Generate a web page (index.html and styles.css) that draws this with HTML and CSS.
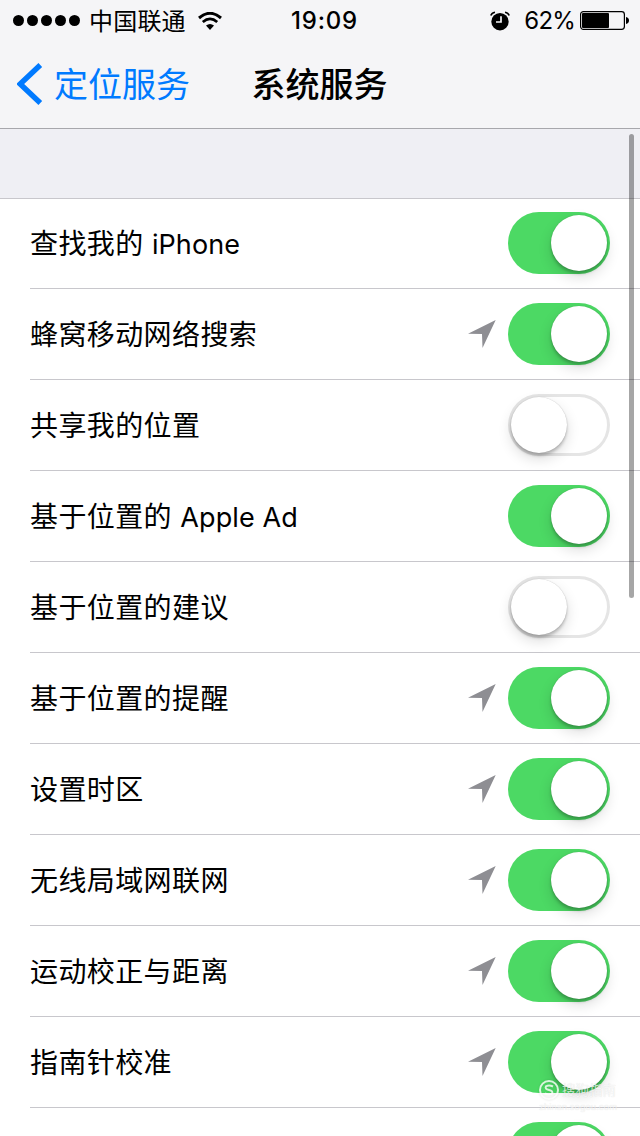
FILE: index.html
```html
<!DOCTYPE HTML>
<html lang="zh-CN">
<head>
<meta charset="utf-8">
<title>系统服务</title>
<link rel="stylesheet" href="styles.css">
</head>

<body>
<!-- 箭头图标，后面各行重复使用 -->
<svg class="defs" width="0" height="0">
	<symbol id="arrow" viewBox="0 0 28 28"><path d="M27.7 0 L14.5 28 L14 14 L0 13.8 Z"/></symbol>
</svg>

<div class="header">
	<div class="status">
		<div class="status-left">
			<span class="signal"><i></i><i></i><i></i><i></i><i></i></span>
			<span class="carrier">中国联通</span>
			<svg class="wifi" width="24" height="18" viewBox="0 0 24 18">
				<path d="M1 6 Q12 -3.4 23 6" fill="none" stroke="#000" stroke-width="3"/>
				<path d="M4.8 10 Q12 3.8 19.2 10" fill="none" stroke="#000" stroke-width="2.7"/>
				<path d="M8 13.6 Q12 10.2 16 13.6 L12 18 Z"/>
			</svg>
		</div>
		<div class="time">19:09</div>
		<div class="status-right">
			<svg class="alarm" width="20" height="20" viewBox="0 0 20 20">
				<circle cx="10" cy="10.7" r="8.7"/>
				<path d="M.8 4.6 Q1.7 1.7 5 1.2 M19.2 4.6 Q18.3 1.7 15 1.2" fill="none" stroke="#000" stroke-width="1.6"/>
				<path d="M11 5.2 V11 H6" fill="none" stroke="#f5f5f7" stroke-width="1.7"/>
			</svg>
			<span class="percent">62%</span>
			<svg class="battery" width="49" height="19" viewBox="0 0 49 19">
				<rect x=".6" y=".6" width="43.8" height="17.8" rx="2.8" fill="none" stroke="#000" stroke-width="1.2"/>
				<rect x="2" y="2" width="27" height="15" rx="1"/>
				<path d="M46 6 Q49 6.8 49 9.5 Q49 12.2 46 13 Z"/>
			</svg>
		</div>
	</div>
	<div class="nav">
		<a class="back" href="javascript:;">
			<svg width="26" height="42" viewBox="0 0 26 42"><path d="M23.3 2 L3.2 21 L23.3 40" fill="none" stroke="#007aff" stroke-width="5.4"/></svg>
			<span>定位服务</span>
		</a>
		<h1>系统服务</h1>
	</div>
</div>

<div class="gap"></div>

<ul class="list">
	<li><span class="name">查找我的 <em>iPhone</em></span><span class="switch on"></span></li>
	<li><span class="name">蜂窝移动网络搜索</span><svg class="arrow"><use href="#arrow"/></svg><span class="switch on"></span></li>
	<li><span class="name">共享我的位置</span><span class="switch"></span></li>
	<li><span class="name">基于位置的 <em>Apple Ad</em></span><span class="switch on"></span></li>
	<li><span class="name">基于位置的建议</span><span class="switch"></span></li>
	<li><span class="name">基于位置的提醒</span><svg class="arrow"><use href="#arrow"/></svg><span class="switch on"></span></li>
	<li><span class="name">设置时区</span><svg class="arrow"><use href="#arrow"/></svg><span class="switch on"></span></li>
	<li><span class="name">无线局域网联网</span><svg class="arrow"><use href="#arrow"/></svg><span class="switch on"></span></li>
	<li><span class="name">运动校正与距离</span><svg class="arrow"><use href="#arrow"/></svg><span class="switch on"></span></li>
	<li><span class="name">指南针校准</span><svg class="arrow"><use href="#arrow"/></svg><span class="switch on"></span></li>
	<li><span class="name"></span><span class="switch on"></span></li>
</ul>

<div class="scrollbar"></div>

<!-- 右下角水印 -->
<div class="mark">
	<svg width="20" height="20" viewBox="0 0 20 20">
		<circle cx="10" cy="10" r="9"/>
		<path d="M14 6.5 Q10 4.5 7 6.3 Q5.5 9 10 10 Q14.5 11 13 13.6 Q10 15.5 6 13.5"/>
	</svg>
	<span class="mark-name">搜狗指南</span>
	<span class="mark-url">zhinan.sogou.com</span>
</div>
</body>
</html>
```
FILE: styles.css
```css
* {margin:0; padding:0; box-sizing:border-box;}
body {width:640px; height:1136px; position:relative; overflow:hidden; background:#fff; color:#000; font-family:Inter,"Noto Sans CJK SC",sans-serif;}
svg {display:block; flex:none;}
.defs {position:absolute;}

/* 状态栏 + 导航栏 */
.header {height:129px; background:#f5f5f7; border-bottom:1px solid #a7a7ac;}
.status {height:40px; display:grid; grid-template-columns:1fr 70px 1fr; align-items:center; white-space:nowrap;}
.status-left {display:flex; align-items:center; padding-left:13px;}
.signal {display:flex; gap:3px;}
.signal i {width:11px; height:11px; border-radius:50%; background:#000;}
.carrier {margin-left:9px; font-size:24px; line-height:40px; letter-spacing:.2px; padding-top:1px; height:40px;}
.wifi {margin-left:12px;}
.time {text-align:center; font-size:24px; font-weight:500; line-height:40px; padding:1px 0 0 6px; letter-spacing:.8px;}
.status-right {display:flex; align-items:center; justify-content:flex-end; padding-right:11px;}
.alarm {margin-right:1px;}
.percent {margin:0 5px 0 13px; font-size:24px; line-height:40px; height:40px; letter-spacing:-.8px;}

.nav {height:88px; display:grid; grid-template-columns:1fr 137px 1fr; align-items:center; white-space:nowrap;}
.back {display:flex; align-items:center; padding-left:17px; color:#007aff; text-decoration:none; font-size:34px; line-height:48px;}
.back span {margin-left:11px;}
.nav h1 {font-size:34px; line-height:48px; font-weight:500;}
.back span, .nav h1 {padding-top:2px;}

.gap {height:69px; background:#efeff4;}

/* 列表 */
.list {height:938px; overflow:hidden; list-style:none; box-shadow:inset 0 1px #c8c7cc;}
.list li {height:91px; margin-left:30px; padding-right:30px; border-bottom:1px solid #c8c7cc; display:flex; align-items:center;}
.name {flex:1; padding-bottom:3px; font-size:28px; letter-spacing:.4px; white-space:nowrap;}
.name em {font-style:normal; font-size:27px; letter-spacing:.1px;}
.arrow {width:28px; height:28px; margin-right:12px; fill:#8e8e93;}

/* 开关 */
.switch {width:102px; height:62px; flex:none; padding:3px; border-radius:31px; display:flex; box-shadow:inset 0 0 0 3px #e5e5e5;}
.switch:before {content:""; width:56px; height:56px; border-radius:50%; background:#fff; box-shadow:0 6px 14px rgba(0,0,0,.14), 0 3px 3px rgba(0,0,0,.2), 0 0 1px rgba(0,0,0,.25);}
.on {justify-content:flex-end; background:#4cd964; box-shadow:none;}

.scrollbar {position:absolute; left:629px; top:134px; width:5px; height:464px; border-radius:3px; background:rgba(0,0,0,.35);}

.mark {position:absolute; left:539px; top:1080px; width:78px; display:grid; grid-template-columns:20px 1fr; column-gap:3px; align-items:center; color:rgba(255,255,255,.75); text-shadow:0 0 1px rgba(0,0,0,.14); white-space:nowrap;}
.mark svg {fill:none; stroke:rgba(255,255,255,.8); stroke-width:2; filter:drop-shadow(0 0 1px rgba(0,0,0,.15));}
.mark-name {font-size:13.5px; line-height:20px;}
.mark-url {grid-column:1 / 3; font-size:9px; line-height:14px;}
```
